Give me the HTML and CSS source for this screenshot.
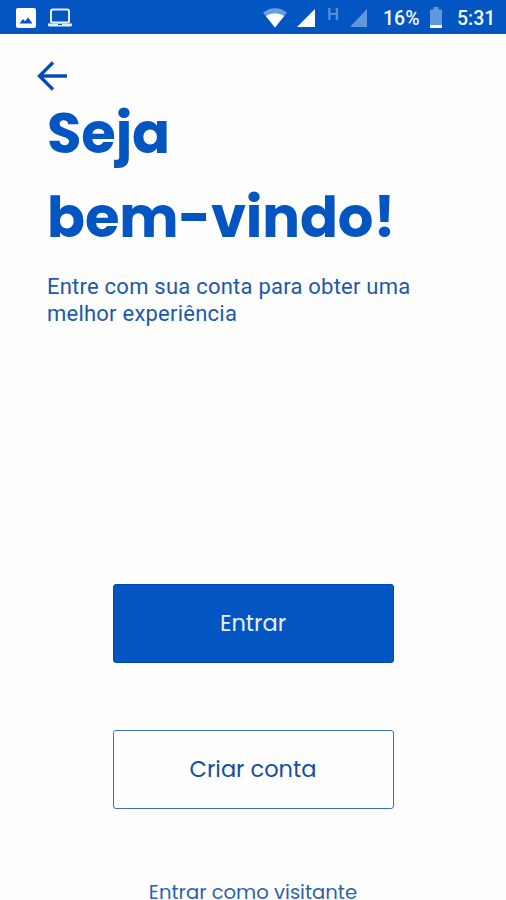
FILE: index.html
```html
<!DOCTYPE html>
<html lang="pt-BR">
<head>
    <meta charset="UTF-8">
    <meta name="viewport" content="width=device-width, initial-scale=1.0">
    <title>Seja bem-vindo!</title>
    <link rel="stylesheet" href="styles.css">
</head>
<body>
    <!-- Barra de status -->
    <header class="status-bar">
        <svg class="icon-image" width="20" height="20" viewBox="0 0 20 20">
            <rect width="20" height="20" rx="2" fill="#fff"/>
            <path d="M3.5 15.5 L7 11 L9 13.3 L12 9.5 L16.5 15.5 Z" fill="#0355c1"/>
        </svg>
        <svg class="icon-laptop" width="26" height="20" viewBox="0 0 26 20">
            <rect x="4" y="1.5" width="18" height="13" rx="1.5" fill="none" stroke="#e3efff" stroke-width="2"/>
            <path d="M1 15.5 H25 V17 Q25 18.5 23.5 18.5 H2.5 Q1 18.5 1 17 Z" fill="#e3efff"/>
            <path d="M11 16.5 H15" stroke="#0355c1" stroke-width="1"/>
        </svg>
        <svg class="icon-wifi" width="24" height="20" viewBox="0 0 24 20">
            <path d="M0 4.5 Q12 -4 24 4.5 L12 19.5 Z" fill="#6c9fe0"/>
            <path d="M2.8 8 Q12 2.5 21.2 8 L12 19.5 Z" fill="#fff"/>
        </svg>
        <svg class="icon-signal" width="18" height="18" viewBox="0 0 18 18">
            <path d="M18 0 V18 H0 Z" fill="#fff"/>
        </svg>
        <span class="network">H</span>
        <svg class="icon-signal-off" width="17" height="18" viewBox="0 0 17 18">
            <path d="M17 0 V18 H0 Z" fill="#6397dd"/>
        </svg>
        <span class="percent">16%</span>
        <svg class="icon-battery" width="12" height="21" viewBox="0 0 12 21">
            <path d="M0 2.5 H3.5 V0 H8.5 V2.5 H12 V18 H0 Z" fill="#6397dd"/>
            <path d="M0 18 H12 V21 H0 Z" fill="#fff"/>
        </svg>
        <span class="clock">5:31</span>
    </header>

    <main class="content">
        <button class="back" aria-label="Voltar">
            <svg width="32" height="30" viewBox="0 0 32 30">
                <path d="M16 1.5 L2.5 15 L16 28.5 M2.5 15 H30" fill="none" stroke="#0b4bb3" stroke-width="3.4"/>
            </svg>
        </button>

        <h1 class="title">Seja<br>bem-vindo!</h1>
        <p class="subtitle">Entre com sua conta para obter uma melhor experiência</p>

        <div class="actions">
            <button class="btn btn-primary">Entrar</button>
            <button class="btn btn-outline">Criar conta</button>
            <a class="guest">Entrar como visitante</a>
        </div>
    </main>
</body>
</html>
```
FILE: styles.css
```css
* {
    box-sizing: border-box;
}
body {
    margin: 0;
    height: 900px;
    overflow: hidden;
    background-color: #fefefe;
    color: #0355c1;
    font-family: Poppins, Inter, sans-serif;
}
button {
    padding: 0;
    border: none;
    background: none;
    font: inherit;
    color: inherit;
}
svg {
    display: block;
    flex: none;
}

/* Status bar */
.status-bar {
    display: flex;
    align-items: center;
    height: 34px;
    padding: 2px 11px 0 16px;
    background-color: #0355c1;
    color: #f2f7ff;
    font-family: Roboto, sans-serif;
    font-size: 19.5px;
    font-weight: 500;
    white-space: nowrap;
}
.icon-image {
    margin-top: -1px;
}
.icon-laptop {
    margin: -1px 0 0 11px;
}
.icon-wifi {
    margin-left: auto;
}
.icon-signal {
    margin-left: 10px;
}
.network {
    width: 12px;
    margin: -9px 0 0 12px;
    font-size: 17px;
    color: #5a92dc;
}
.icon-signal-off {
    margin-left: 11px;
}
.percent {
    width: 37px;
    margin-left: 16px;
}
.icon-battery {
    margin: -2px 0 0 10px;
}
.clock {
    width: 38px;
    margin-left: 15px;
}

/* Content */
.content {
    padding: 27px 47px 0;
}
.back {
    display: block;
    margin-left: -10px;
}
.title {
    margin: 1px 0 0;
    font-size: 56px;
    font-weight: 700;
    line-height: 84px;
    letter-spacing: -0.1px;
    white-space: nowrap;
}
.subtitle {
    width: 380px;
    margin: 13px 0 0;
    font-family: Roboto, sans-serif;
    font-size: 22px;
    line-height: 27px;
    letter-spacing: 0.23px;
    color: #1b59ad;
}

/* Buttons */
.actions {
    display: flex;
    flex-direction: column;
    align-items: center;
    margin-top: 257px;
}
.btn {
    width: 281px;
    height: 79px;
    padding-bottom: 2px;
    border-radius: 3px;
    font-size: 22.5px;
}
.btn-primary {
    border: 1px solid #0245b2;
    background-color: #0355c1;
    color: #e6f1ff;
}
.btn-outline {
    margin-top: 67px;
    border: 1.5px solid #3a74b6;
    color: #164da5;
}
.guest {
    margin-top: 75px;
    font-size: 19.6px;
    line-height: 16px;
    color: #2b62ad;
}
```
